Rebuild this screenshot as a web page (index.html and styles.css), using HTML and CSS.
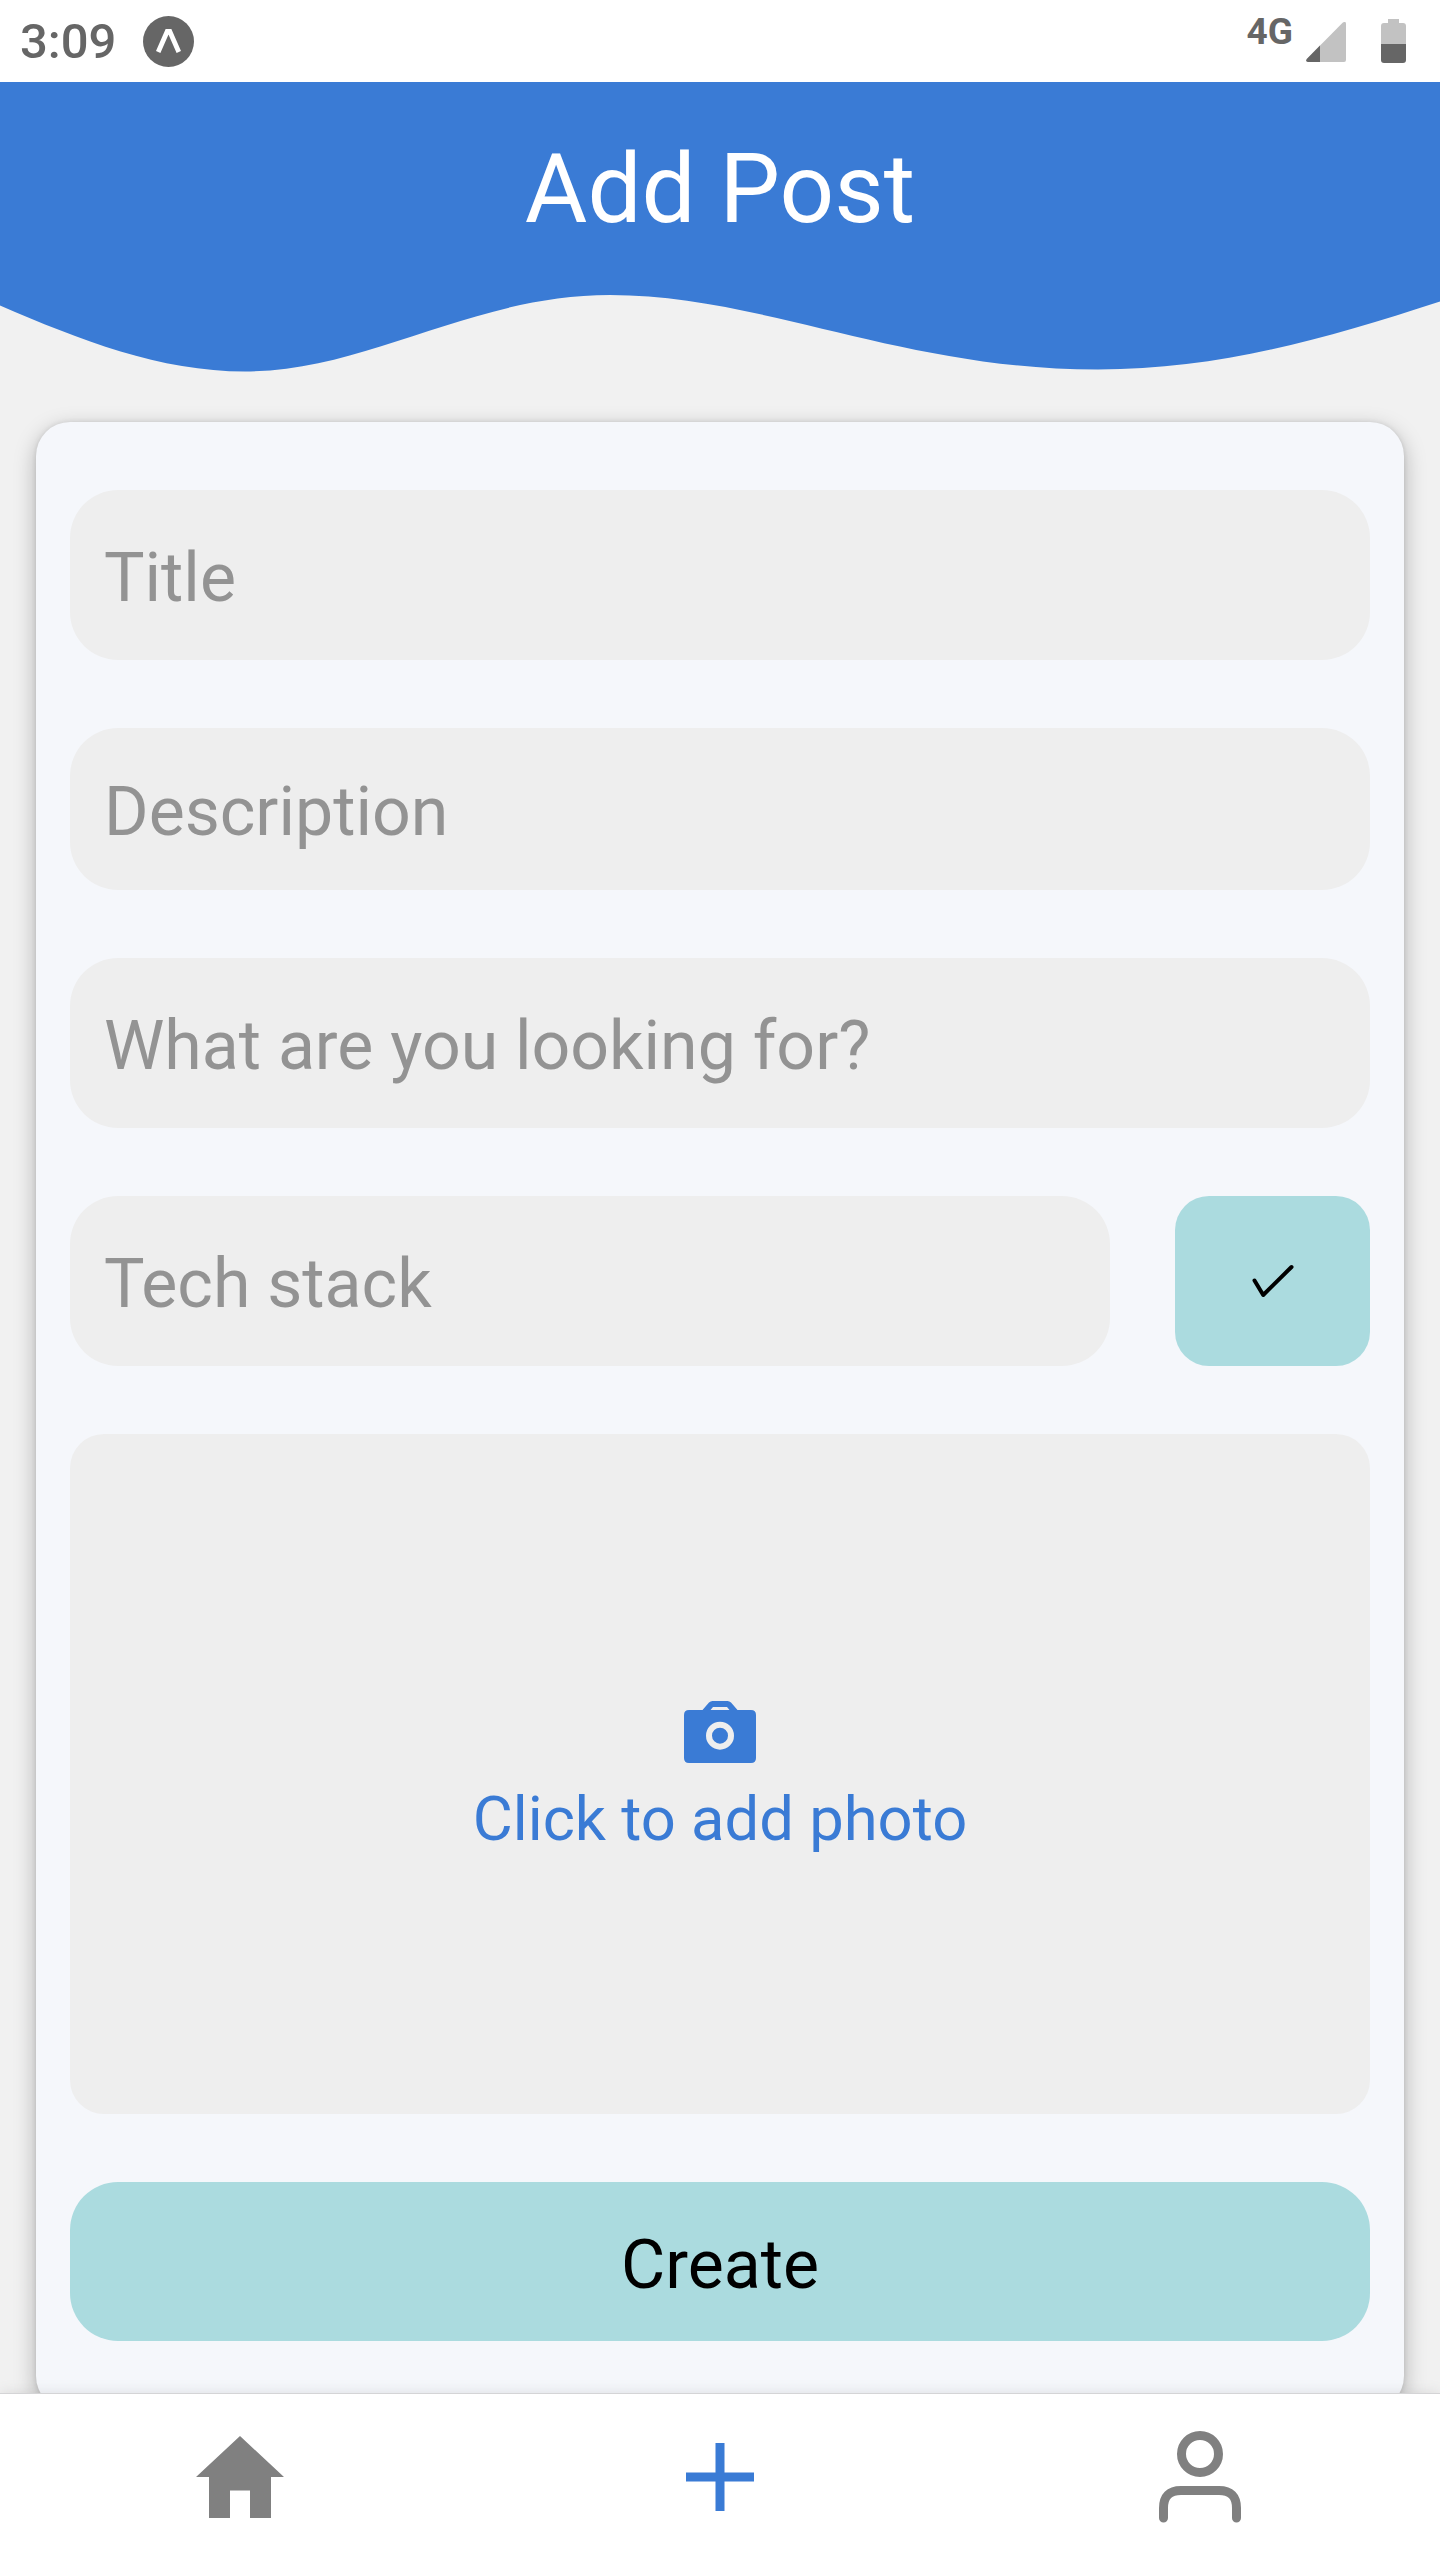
FILE: index.html
```html
<!DOCTYPE html>
<html lang="en">
<head>
<meta charset="utf-8">
<title>Add Post</title>
<link rel="stylesheet" href="styles.css">
</head>
<body>
<div class="app">
  <div class="status-bar">
    <div class="status-left">
      <span class="clock">3:09</span>
      <svg class="app-badge" width="51" height="51" viewBox="0 0 51 51"><circle cx="25.5" cy="25.5" r="25.5" fill="#666"/><path d="M15.2 36 24.2 15.5H26.8L35.8 36" fill="none" stroke="#fff" stroke-width="4.8"/></svg>
    </div>
    <div class="status-right">
      <span class="network">4G</span>
      <svg class="signal" width="40" height="40" viewBox="0 0 40 40"><path d="M1 36.8 36.6.8Q40-1.5 40 2V38Q40 40 38 40H2Q-1 39.500 1 36.800Z" fill="#c2c2c2"/><path d="M14 23.600V40H2Q-1 39.500 1 36.800Z" fill="#666"/></svg>
      <svg class="battery" width="25" height="44" viewBox="0 0 25 44"><path d="M7 0H18V4H22Q25 4 25 7V25H0V7Q0 4 3 4H7Z" fill="#c2c2c2"/><path d="M0 25H25V41Q25 44 22 44H3Q0 44 0 41Z" fill="#666"/></svg>
    </div>
  </div>

  <main class="screen">
    <header class="header">
      <h1 class="header-title">Add Post</h1>
      <svg class="wave" width="1440" height="92" viewBox="0 280 1440 92"><path d="M0 279V305.500C80 340 160 371.500 245 371.500C367 371.500 472 295 610 295C762 295 902 369.500 1098 369.500C1217 369.500 1322 340 1440 301.500V279Z" fill="#3a7bd5"/></svg>
    </header>

    <form class="card">
      <input class="field" type="text" placeholder="Title">
      <input class="field field-short" type="text" placeholder="Description">
      <input class="field" type="text" placeholder="What are you looking for?">
      <div class="stack-row">
        <input class="field" type="text" placeholder="Tech stack">
        <button class="confirm" type="button" aria-label="Add">
          <svg width="42" height="34" viewBox="0 0 42 34"><path d="M2.500 16.500 11.200 31 39.500 3" fill="none" stroke="#000" stroke-width="4" stroke-linecap="round" stroke-linejoin="round"/></svg>
        </button>
      </div>
      <button class="photo" type="button">
        <svg width="72" height="62" viewBox="0 0 72 62"><path fill="#3a7bd5" fill-rule="evenodd" d="M5 9H18.500L25 1.500Q26.500 0 28.500 0H43.500Q45.500 0 47 1.500L53.500 9H67Q72 9 72 14V57Q72 62 67 62H5Q0 62 0 57V14Q0 9 5 9ZM26.500 9H45.500L43 6H29Z"/><circle cx="36" cy="34.700" r="11" fill="none" stroke="#eee" stroke-width="6"/></svg>
        <span class="photo-label">Click to add photo</span>
      </button>
      <button class="create" type="button">Create</button>
    </form>
  </main>

  <nav class="tabs">
    <a class="tab"><svg width="88" height="82" viewBox="0 0 88 82"><path d="M44 0 88 41H75V82H54V54.500H34V82H13V41H0Z" fill="#808080"/></svg></a>
    <a class="tab"><svg width="68" height="68" viewBox="0 0 68 68"><path d="M34 0V68M0 34H68" fill="none" stroke="#3a7bd5" stroke-width="9"/></svg></a>
    <a class="tab"><svg width="82" height="92" viewBox="0 0 82 92"><g fill="none" stroke="#808080" stroke-width="9" stroke-linecap="round"><circle cx="41" cy="23" r="18.500"/><path d="M4.500 87V77Q4.500 59.500 22 59.500H60Q77.500 59.500 77.500 77V87"/></g></svg></a>
  </nav>
</div>
</body>
</html>
```
FILE: styles.css
```css
* { box-sizing: border-box; }

body {
  margin: 0;
  font-family: Roboto, "Liberation Sans", sans-serif;
  background: #f1f1f1;
}

.app {
  display: flex;
  flex-direction: column;
  width: 1440px;
  height: 2560px;
  overflow: hidden;
}

.status-bar {
  display: flex;
  justify-content: space-between;
  flex: none;
  height: 82px;
  padding: 0 34px 0 20px;
  background: #fff;
  color: #666;
}

.status-left,
.status-right { display: flex; align-items: flex-start; }

.clock {
  width: 95px;
  padding-top: 13px;
  font-size: 49px;
  line-height: 58px;
  font-weight: 500;
}

.app-badge { margin: 16px 0 0 28px; }

.network {
  padding-top: 11px;
  font-size: 37px;
  line-height: 42px;
  font-weight: 700;
}

.signal { margin: 22px 0 0 13px; }
.battery { margin: 19px 0 0 35px; }

.screen {
  flex: 1;
  min-height: 0;
  overflow: hidden;
}

.header {
  display: flex;
  flex-direction: column;
  height: 340px;
}

.header-title {
  flex: none;
  height: 198px;
  margin: 0;
  padding-top: 51px;
  background: #3a7bd5;
  color: #fff;
  font-size: 96px;
  line-height: 112px;
  font-weight: 400;
  text-align: center;
}

.wave { display: block; flex: none; }

.card {
  display: flex;
  flex-direction: column;
  gap: 68px;
  width: 1368px;
  height: 1988px;
  margin: 0 auto;
  padding: 68px 34px;
  border-radius: 34px;
  background: #f5f7fb;
  box-shadow: 0 7px 22px rgba(0, 0, 0, 0.27), 0 0 5px rgba(0, 0, 0, 0.1);
}

.field {
  display: block;
  flex: none;
  width: 100%;
  height: 170px;
  margin: 0;
  padding: 6px 34px 0;
  border: 0;
  border-radius: 48px;
  background: #eee;
  font: 400 68px/80px Roboto, "Liberation Sans", sans-serif;
}

.field::placeholder { color: #939393; opacity: 1; }

.field-short { height: 162px; }

.stack-row { display: flex; justify-content: space-between; }
.stack-row .field { width: 1040px; }

button {
  margin: 0;
  padding: 0;
  border: 0;
  font-family: inherit;
}

.confirm {
  display: flex;
  align-items: center;
  justify-content: center;
  width: 195px;
  height: 170px;
  border-radius: 34px;
  background: #abdbdf;
}

.photo {
  display: flex;
  flex: none;
  flex-direction: column;
  align-items: center;
  height: 680px;
  padding-top: 267px;
  border-radius: 34px;
  background: #eee;
}

.photo-label {
  margin-top: 19px;
  color: #3a7bd5;
  font-size: 61.5px;
  line-height: 74px;
}

.create {
  flex: none;
  height: 159px;
  padding-top: 6px;
  border-radius: 48px;
  background: #abdbdf;
  color: #000;
  font-size: 68px;
}

.tabs {
  position: relative;
  display: grid;
  grid-template-columns: repeat(3, 1fr);
  flex: none;
  height: 167px;
  border-top: 1px solid #d4d4d6;
  background: #fff;
  box-shadow: 0 0 14px rgba(0, 0, 0, 0.1);
}

.tab { display: flex; align-items: center; justify-content: center; }
```
